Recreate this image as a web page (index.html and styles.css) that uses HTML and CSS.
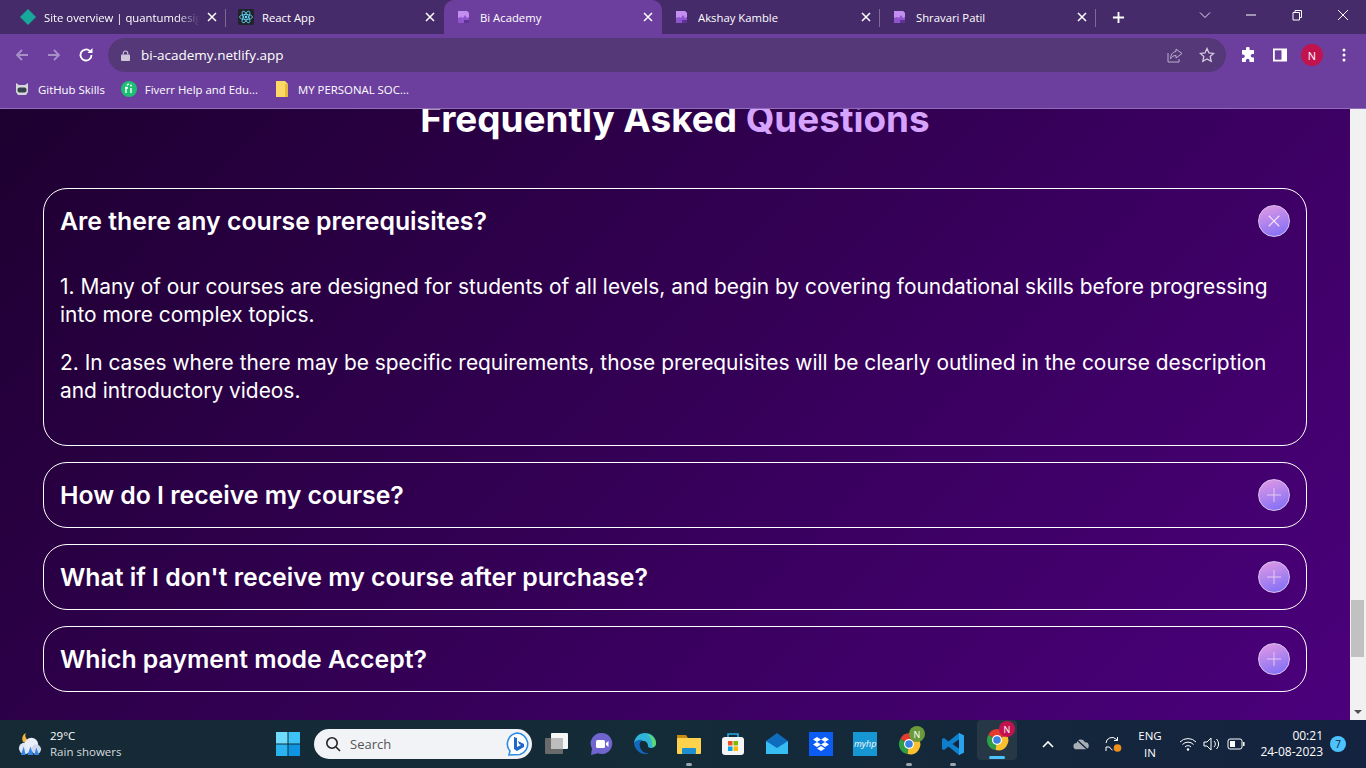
FILE: index.html
```html
<!DOCTYPE html>
<html lang="en">
<head>
    <meta charset="UTF-8">
    <meta name="viewport" content="width=device-width, initial-scale=1.0">
    <title>Bi Academy</title>
    <link rel="stylesheet" href="styles.css">
</head>
<body>
<svg class="defs" width="0" height="0">
    <symbol id="biLogo" viewBox="0 0 16 16">
        <path d="M2 2h9l2 2v10H2z" fill="#8e55cc"/>
        <path d="M2 2h9l2 2v4l-2 1-2-3-2 3-2-1-3 1z" fill="#c48df2"/>
        <path d="M8 11h5v3H8z" fill="#5f3396"/>
    </symbol>
    <symbol id="closeX" viewBox="0 0 12 12">
        <path d="M2 2l8 8M10 2l-8 8" stroke="#fff" stroke-width="1.500" fill="none"/>
    </symbol>
    <symbol id="chromeLogo" viewBox="0 0 24 24">
        <path d="M12 12L3.300 7A10 10 0 0 1 21.700 7z" fill="#e33b2e"/>
        <path d="M12 12l-8.700-5A10 10 0 0 0 10.500 22z" fill="#2f9e44"/>
        <path d="M12 12l9.700-5A10 10 0 0 1 10.500 22z" fill="#fbc02d"/>
        <circle cx="12" cy="12" r="5" fill="#fff"/>
        <circle cx="12" cy="12" r="3.800" fill="#3b82e0"/>
    </symbol>
</svg>

<!-- Tab strip -->
<div class="tabstrip">
    <div class="tab sep">
        <svg class="tab-icon" viewBox="0 0 16 16"><path d="M8 0l8 8-8 8-8-8z" fill="#16a89a"/></svg>
        <span class="tab-title fade">Site overview | quantumdesign</span>
        <svg class="tab-close"><use href="#closeX"/></svg>
    </div>
    <div class="tab">
        <svg class="tab-icon" viewBox="0 0 16 16">
            <rect width="16" height="16" rx="2" fill="#20232a"/>
            <g fill="none" stroke="#61dafb" stroke-width=".8">
                <ellipse cx="8" cy="8" rx="6.500" ry="2.500"/>
                <ellipse cx="8" cy="8" rx="6.500" ry="2.500" transform="rotate(60 8 8)"/>
                <ellipse cx="8" cy="8" rx="6.500" ry="2.500" transform="rotate(120 8 8)"/>
            </g>
            <circle cx="8" cy="8" r="1.300" fill="#61dafb"/>
        </svg>
        <span class="tab-title">React App</span>
        <svg class="tab-close"><use href="#closeX"/></svg>
    </div>
    <div class="tab active">
        <svg class="tab-icon"><use href="#biLogo"/></svg>
        <span class="tab-title">Bi Academy</span>
        <svg class="tab-close"><use href="#closeX"/></svg>
    </div>
    <div class="tab sep">
        <svg class="tab-icon"><use href="#biLogo"/></svg>
        <span class="tab-title">Akshay Kamble</span>
        <svg class="tab-close"><use href="#closeX"/></svg>
    </div>
    <div class="tab sep short">
        <svg class="tab-icon"><use href="#biLogo"/></svg>
        <span class="tab-title">Shravari Patil</span>
        <svg class="tab-close"><use href="#closeX"/></svg>
    </div>
    <svg class="new-tab" viewBox="0 0 14 14"><path d="M7 1v12M1 7h12" stroke="#fff" stroke-width="2"/></svg>
    <div class="window-controls">
        <svg viewBox="0 0 12 12"><path d="M1 3.500l5 5 5-5" stroke="#e8e0f0" fill="none"/></svg>
        <svg viewBox="0 0 12 12"><path d="M1 6h10" stroke="#fff"/></svg>
        <svg viewBox="0 0 12 12"><path d="M2 3.500h6.500V11H2zM4 3.500V1.500h6.500V8.500H8.500" stroke="#fff" fill="none"/></svg>
        <svg viewBox="0 0 12 12"><path d="M1 1l10 10M11 1L1 11" stroke="#fff"/></svg>
    </div>
</div>

<!-- Address bar -->
<div class="toolbar">
    <svg class="nav dim" viewBox="0 0 16 16"><path d="M14 8H3M8 3L3 8l5 5" stroke="#a88fc6" stroke-width="1.800" fill="none"/></svg>
    <svg class="nav dim" viewBox="0 0 16 16"><path d="M2 8h11M8 3l5 5-5 5" stroke="#a88fc6" stroke-width="1.800" fill="none"/></svg>
    <svg class="nav" viewBox="0 0 16 16"><path d="M13.500 8A5.500 5.500 0 1 1 11.800 4" stroke="#fff" stroke-width="1.800" fill="none"/><path d="M9.500 6h5V1z" fill="#fff"/></svg>
    <div class="omnibox">
        <svg class="lock" viewBox="0 0 10 12"><path d="M2.500 5V3.500a2.500 2.500 0 0 1 5 0V5" stroke="#cfc6da" stroke-width="1.200" fill="none"/><rect y="5" width="10" height="7" rx="1" fill="#cfc6da"/></svg>
        <span class="url">bi-academy.netlify.app</span>
        <svg class="omni-icon" viewBox="0 0 16 16"><path d="M9 2l6 4.500L9 11V8.500C6 8.500 4.500 10 3.500 12 3.500 8 5.500 5 9 4.500zM1 6v9h11v-3" stroke="#bdb0cd" fill="none"/></svg>
        <svg class="omni-icon" viewBox="0 0 16 16"><path d="M8 1.500l2 4.400 4.700.5-3.500 3.200 1 4.700L8 11.900l-4.200 2.400 1-4.700L1.300 6.400 6 5.900z" stroke="#d5cce0" stroke-width="1.300" fill="none"/></svg>
    </div>
    <div class="tools">
        <svg viewBox="0 0 16 16"><path d="M6 1.500a1.800 1.800 0 0 1 3.600 0V3H14v4h-1.500a1.800 1.800 0 0 0 0 3.600H14V15H9.500v-1.500a1.800 1.800 0 0 0-3.600 0V15H2v-4h1a1.800 1.800 0 0 0 0-3.600H2V3h4z" fill="#fff"/></svg>
        <svg viewBox="0 0 16 16"><rect x="1" y="1.500" width="14" height="13" fill="#fff"/><rect x="2.800" y="3.300" width="6.700" height="9.400" fill="#6c3f9e"/></svg>
        <span class="avatar">N</span>
        <svg viewBox="0 0 16 16"><circle cx="8" cy="3" r="1.500" fill="#fff"/><circle cx="8" cy="8" r="1.500" fill="#fff"/><circle cx="8" cy="13" r="1.500" fill="#fff"/></svg>
    </div>
</div>

<!-- Bookmarks -->
<div class="bookmarks">
    <div class="bookmark">
        <svg viewBox="0 0 16 16"><path d="M2 2l3 2h6l3-2v9l-2 3H4l-2-3z" fill="#d5d8da"/><rect x="3.500" y="6.500" width="9" height="5" rx="2" fill="#39424e"/></svg>
        <span>GitHub Skills</span>
    </div>
    <div class="bookmark">
        <svg viewBox="0 0 16 16"><circle cx="8" cy="8" r="8" fill="#1dbf73"/><path d="M5 12V6.500h1.500M4 7h3M6.500 4.500C6 3.500 7.500 3 8 3.500M10 7v5" stroke="#fff" stroke-width="1.400" fill="none"/><circle cx="10" cy="4.500" r="1" fill="#fff"/></svg>
        <span>Fiverr Help and Edu...</span>
    </div>
    <div class="bookmark">
        <svg viewBox="0 0 12 16"><path d="M0 0h9l3 3v13H0z" fill="#fcd866"/><path d="M9 0v3h3v13H9z" fill="#e8b93c"/></svg>
        <span>MY PERSONAL SOC...</span>
    </div>
</div>

<!-- Page viewport with its scrollbar -->
<div class="viewport">
    <main class="page">
        <h1 class="faq-title">Frequently Asked <span class="accent">Questions</span></h1>
        <div class="faq-list">
            <section class="faq-item">
                <div class="faq-head">
                    <h3>Are there any course prerequisites?</h3>
                    <button class="toggle" type="button"><svg viewBox="0 0 12 12"><path d="M1.500 1.500l9 9M10.500 1.500l-9 9" stroke="#f0e6fa" stroke-width="1"/></svg></button>
                </div>
                <div class="faq-body">
                    <p>1. Many of our courses are designed for students of all levels, and begin by covering foundational skills before progressing into more complex topics.</p>
                    <p>2. In cases where there may be specific requirements, those prerequisites will be clearly outlined in the course description and introductory videos.</p>
                </div>
            </section>
            <section class="faq-item">
                <div class="faq-head">
                    <h3>How do I receive my course?</h3>
                    <button class="toggle" type="button"><svg viewBox="0 0 14 14"><path d="M7 0v14M0 7h14" stroke="#e2c9f2" stroke-width="1"/></svg></button>
                </div>
            </section>
            <section class="faq-item">
                <div class="faq-head">
                    <h3>What if I don't receive my course after purchase?</h3>
                    <button class="toggle" type="button"><svg viewBox="0 0 14 14"><path d="M7 0v14M0 7h14" stroke="#e2c9f2" stroke-width="1"/></svg></button>
                </div>
            </section>
            <section class="faq-item">
                <div class="faq-head">
                    <h3>Which payment mode Accept?</h3>
                    <button class="toggle" type="button"><svg viewBox="0 0 14 14"><path d="M7 0v14M0 7h14" stroke="#e2c9f2" stroke-width="1"/></svg></button>
                </div>
            </section>
        </div>
    </main>
    <div class="scrollbar">
        <div class="arrow-up"></div>
        <div class="track"><div class="thumb"></div></div>
        <div class="arrow-down"></div>
    </div>
</div>

<!-- Windows taskbar -->
<footer class="taskbar">
    <div class="weather">
        <svg viewBox="0 0 26 26">
            <path d="M9 1a7 7 0 0 0 5 9 7 7 0 0 1-8 0 7 7 0 0 1 3-9z" fill="#f5b53f"/>
            <circle cx="8" cy="17" r="6" fill="#dfe7f5"/>
            <circle cx="15" cy="13" r="7" fill="#e9eef8"/>
            <circle cx="20" cy="18" r="5" fill="#cfd9ee"/>
            <path d="M7 15l-3 9h5zM14 15l-3 9h6zM20 16l-2 8h5z" fill="#3a86e8"/>
        </svg>
        <div class="weather-text">
            <span>29°C</span>
            <span class="muted">Rain showers</span>
        </div>
    </div>
    <div class="start">
        <svg viewBox="0 0 24 24">
            <rect width="11.500" height="11.500" fill="#6fdcfb"/>
            <rect x="12.500" width="11.500" height="11.500" fill="#3dc3f5"/>
            <rect y="12.500" width="11.500" height="11.500" fill="#2bb2f0"/>
            <rect x="12.500" y="12.500" width="11.500" height="11.500" fill="#0f93e3"/>
        </svg>
    </div>
    <div class="search">
        <svg class="search-icon" viewBox="0 0 16 16"><circle cx="7" cy="7" r="5.200" stroke="#222" stroke-width="1.600" fill="none"/><path d="M11 11l4 4" stroke="#222" stroke-width="1.600"/></svg>
        <span>Search</span>
        <svg class="bing" viewBox="0 0 24 24"><path d="M12 1a11 11 0 0 1 3 21.500L4 23l1-4A11 11 0 0 1 12 1z" fill="#fff" stroke="#2b8ae6" stroke-width="1.600"/><path d="M9 5l3 1v9l4-2-2-1-1-3 6 3v3l-7 4-3-2z" fill="#2166c9"/></svg>
    </div>
    <div class="apps">
        <div class="app">
            <svg viewBox="0 0 24 24"><rect x="6" y="1" width="17" height="16" rx="1" fill="#f6f6f6"/><rect y="6" width="18" height="16" rx="1" fill="#6a6a6a"/><rect x="6" y="6" width="12" height="11" fill="#bdbdbd"/></svg>
        </div>
        <div class="app">
            <svg viewBox="0 0 24 24"><path d="M13 1a10.500 10.500 0 1 1-4 20.300L2 23l1-6.500A10.500 10.500 0 0 1 13 1z" fill="#7064cf"/><rect x="7" y="8" width="9" height="8" rx="1.500" fill="#fff"/><path d="M17 11l2.500-2v6L17 13z" fill="#fff"/></svg>
        </div>
        <div class="app">
            <svg viewBox="0 0 24 24"><path d="M1 11C2 5 6 1 12 1c6 0 11 4 11 10 0 4-3 5-5 5s-3-1-3-2c0-3-2-5-5-5-4 0-8 1-9 2z" fill="#2fb4d8"/><path d="M14 2c5 1 9 5 9 9 0 3-2 4-4 4 1-5-1-10-5-13z" fill="#5ed86f"/><path d="M1 11c1-2 5-4 9-3-3 1-4 4-3 7 1 4 5 7 10 6a11.500 11.500 0 0 1-16-10z" fill="#1367bd"/></svg>
        </div>
        <div class="app dot">
            <svg viewBox="0 0 24 24"><path d="M0 3h9l2 3h13v5H0z" fill="#c88a12"/><rect y="6" width="24" height="16" rx="1" fill="#ffd24d"/><rect x="5" y="16" width="14" height="6" rx="1" fill="#1d8fd0"/></svg>
        </div>
        <div class="app">
            <svg viewBox="0 0 24 24"><path d="M7 6V2h10v4" stroke="#27a8e0" stroke-width="1.600" fill="none"/><rect x="1" y="5" width="22" height="18" rx="3" fill="#f5f5f5"/><rect x="7" y="9" width="4.500" height="4.500" fill="#f25022"/><rect x="12.500" y="9" width="4.500" height="4.500" fill="#7fba00"/><rect x="7" y="14.500" width="4.500" height="4.500" fill="#00a4ef"/><rect x="12.500" y="14.500" width="4.500" height="4.500" fill="#ffb900"/></svg>
        </div>
        <div class="app">
            <svg viewBox="0 0 24 24"><path d="M12 1l11 8v13H1V9z" fill="#0f6cbd"/><path d="M1 9l11 7 11-7v13H1z" fill="#36bdf2"/></svg>
        </div>
        <div class="app">
            <svg viewBox="0 0 24 24"><rect width="24" height="24" fill="#0a5cf5"/><path d="M8 5l4 2.500L8 10 4 7.500zM16 5l4 2.500-4 2.500-4-2.500zM8 10l4 2.500L8 15l-4-2.500zM16 10l4 2.500-4 2.500-4-2.500zM12 14l4 2.500-4 2.500-4-2.500z" fill="#fff"/></svg>
        </div>
        <div class="app">
            <svg viewBox="0 0 24 24"><rect width="24" height="24" fill="#1696d2"/></svg>
            <span class="hp-label">myhp</span>
        </div>
        <div class="app dot">
            <svg viewBox="0 0 24 24"><use href="#chromeLogo"/></svg>
            <span class="app-badge green">N</span>
        </div>
        <div class="app dot">
            <svg viewBox="0 0 24 24"><path d="M18 1l5 2.500v17L18 23 7.500 14.500 3 18l-2-1V7l2-1 4.500 3.500z" fill="#0e7fcc"/><path d="M18 7.500L11.500 12l6.500 4.500z" fill="#14233f"/><path d="M18 1l5 2.500v17L18 23z" fill="#2ba3ea"/></svg>
        </div>
        <div class="app current">
            <svg viewBox="0 0 24 24"><use href="#chromeLogo"/></svg>
            <span class="app-badge red">N</span>
        </div>
    </div>
    <div class="tray">
        <svg class="tray-chevron" viewBox="0 0 12 8"><path d="M1 7l5-5 5 5" stroke="#fff" stroke-width="1.600" fill="none"/></svg>
        <svg class="tray-cloud" viewBox="0 0 18 14"><path d="M4 13a3.500 3.500 0 0 1 0-7 5 5 0 0 1 9.500-1A4 4 0 0 1 14 13z" fill="#a9b0b5"/><path d="M3 1l13 12" stroke="#14233f" stroke-width="1.500"/></svg>
        <svg class="tray-sync" viewBox="0 0 18 18"><path d="M2 8a6 6 0 0 1 10-4l1.500 1.500M13.500 2v3.500H10M2 12v4M2 12h3.500a6 6 0 0 0 3 3" stroke="#fff" fill="none"/><circle cx="13.500" cy="13" r="3.800" fill="#f18f1d"/></svg>
        <div class="lang"><span>ENG</span><span>IN</span></div>
        <svg class="tray-icon" viewBox="0 0 18 14"><path d="M1 5a11 11 0 0 1 16 0M3.500 7.500a7.500 7.500 0 0 1 11 0M6 10a4 4 0 0 1 6 0" stroke="#fff" fill="none"/><circle cx="9" cy="12.500" r="1.200" fill="#fff"/></svg>
        <svg class="tray-icon" viewBox="0 0 18 14"><path d="M1 5h3l4-4v12l-4-4H1z" stroke="#fff" fill="none"/><path d="M11 4a4 4 0 0 1 0 6M13.500 2a7 7 0 0 1 0 10" stroke="#fff" fill="none"/></svg>
        <svg class="tray-icon" viewBox="0 0 18 14"><rect x="1" y="2" width="14" height="10" rx="2" stroke="#fff" fill="none"/><rect x="3" y="4" width="5" height="6" fill="#fff"/><rect x="16" y="5" width="1.500" height="4" fill="#fff"/></svg>
        <div class="clock"><span>00:21</span><span>24-08-2023</span></div>
        <span class="notif">7</span>
    </div>
</footer>
</body>
</html>
```

FILE: styles.css
```css
* {
    box-sizing: border-box;
}

html, body {
    height: 100%;
}

body {
    margin: 0;
    height: 768px;
    overflow: hidden;
    display: flex;
    flex-direction: column;
    font-family: "Open Sans", "Liberation Sans", sans-serif;
    background-color: #000;
}

.defs {
    position: absolute;
}

/* Tab strip */
.tabstrip {
    height: 34px;
    flex: none;
    display: flex;
    align-items: stretch;
    padding-left: 8px;
    background-color: #452b69;
}

.tab {
    width: 218px;
    flex: none;
    display: flex;
    align-items: center;
    padding: 0 8px 0 12px;
    color: #fff;
    font-size: 11.300px;
    position: relative;
}

.tab.short {
    width: 216px;
}

.tab.sep::after {
    content: "";
    position: absolute;
    right: 0;
    top: 9px;
    height: 18px;
    width: 1px;
    background-color: #7d6a98;
}

.tab.active {
    background-color: #6c3f9e;
    border-radius: 10px 10px 0 0;
}

.tab-icon {
    width: 16px;
    height: 16px;
    flex: none;
}

.tab-title {
    flex: 1;
    margin-left: 8px;
    white-space: nowrap;
    overflow: hidden;
}

.tab-title.fade {
    -webkit-mask-image: linear-gradient(90deg, #000 85%, transparent);
    mask-image: linear-gradient(90deg, #000 85%, transparent);
}

.tab-close {
    width: 12px;
    height: 12px;
    flex: none;
    margin-left: 6px;
}

.new-tab {
    width: 13px;
    height: 13px;
    flex: none;
    align-self: center;
    margin-left: 16px;
}

.window-controls {
    display: flex;
    margin-left: auto;
    padding: 9px 17px 0 0;
    gap: 34px;
}

.window-controls svg {
    width: 12px;
    height: 12px;
}

/* Address bar */
.toolbar {
    height: 42px;
    flex: none;
    display: flex;
    align-items: center;
    padding-left: 14px;
    background-color: #6c3f9e;
}

.nav {
    width: 16px;
    height: 16px;
    margin-right: 16px;
    flex: none;
}

.omnibox {
    width: 1118px;
    height: 34px;
    margin-left: -2px;
    flex: none;
    display: flex;
    align-items: center;
    padding: 0 11px 0 13px;
    border-radius: 17px;
    background-color: #553878;
    color: #fff;
    font-size: 13.500px;
}

.lock {
    width: 9px;
    height: 11px;
    flex: none;
}

.url {
    flex: 1;
    margin-left: 11px;
}

.omni-icon {
    width: 16px;
    height: 16px;
    margin-left: 16px;
    flex: none;
}

.tools {
    display: flex;
    align-items: center;
    gap: 16px;
    margin-left: 14px;
}

.tools svg {
    width: 16px;
    height: 16px;
}

.avatar {
    width: 22px;
    height: 22px;
    margin: 0 -3px;
    border-radius: 50%;
    display: flex;
    align-items: center;
    justify-content: center;
    background-color: #c2134f;
    color: #fff;
    font-size: 11px;
}

/* Bookmarks */
.bookmarks {
    height: 33px;
    flex: none;
    display: flex;
    align-items: center;
    padding: 0 0 6px 14px;
    gap: 16px;
    background-color: #6c3f9e;
    border-bottom: 1px solid #8e6cb8;
    color: #fff;
    font-size: 11.400px;
}

.bookmark {
    display: flex;
    align-items: center;
    gap: 8px;
}

.bookmark svg {
    width: 16px;
    height: 16px;
}

/* Page */
.viewport {
    flex: 1;
    min-height: 0;
    display: flex;
}

.page {
    flex: 1;
    min-width: 0;
    overflow: hidden;
    padding: 0 43px;
    color: #fff;
    font-family: Inter, "Open Sans", sans-serif;
    background: linear-gradient(135deg, #1e0030 0%, #4b007c 100%);
}

.faq-title {
    margin: -8px 0 0;
    height: 87px;
    text-align: center;
    font-size: 36.900px;
    line-height: 36px;
    font-weight: 700;
}

.accent {
    color: #d6a3ff;
}

.faq-list {
    display: flex;
    flex-direction: column;
    gap: 16px;
}

.faq-item {
    border: 1px solid #fff;
    border-radius: 24px;
    padding: 0 16px;
}

.faq-head {
    height: 64px;
    display: flex;
    align-items: center;
    justify-content: space-between;
}

.faq-head h3 {
    margin: 0;
    font-size: 24.800px;
    font-weight: 600;
}

.toggle {
    width: 32px;
    height: 32px;
    padding: 0;
    display: flex;
    align-items: center;
    justify-content: center;
    border: 1px solid #d8c4ee;
    border-radius: 50%;
    background: linear-gradient(160deg, #e49ae4, #7a6cf8);
}

.toggle svg {
    width: 14px;
    height: 14px;
}

.faq-body {
    padding: 20px 0 40px;
    font-size: 20.900px;
    line-height: 28px;
}

.faq-body p {
    margin: 0 0 20px;
}

.faq-body p:last-child {
    margin-bottom: 0;
}

/* Scrollbar */
.scrollbar {
    width: 16px;
    flex: none;
    display: flex;
    flex-direction: column;
    background-color: #f1f1f1;
}

.track {
    flex: 1;
    padding: 475px 2px 0 1px;
}

.thumb {
    height: 57px;
    background-color: #c1c1c1;
}

.arrow-up,
.arrow-down {
    height: 16px;
    flex: none;
}

.arrow-down {
    margin-top: auto;
    position: relative;
}

.arrow-down::after {
    content: "";
    position: absolute;
    left: 4px;
    top: 6px;
    border-left: 4px solid transparent;
    border-right: 4px solid transparent;
    border-top: 4px solid #505050;
}

/* Taskbar */
.taskbar {
    height: 48px;
    flex: none;
    display: flex;
    align-items: center;
    color: #fff;
    font-size: 12px;
    background: linear-gradient(90deg, #152a35 0%, #142b38 50%, #14233f 100%);
}

.weather {
    width: 266px;
    flex: none;
    display: flex;
    align-items: center;
    padding-left: 17px;
    gap: 8px;
}

.weather svg {
    width: 25px;
    height: 25px;
}

.weather-text {
    display: flex;
    flex-direction: column;
    font-size: 11.500px;
    line-height: 16px;
}

.muted {
    color: #d5dbdf;
}

.start {
    width: 48px;
    flex: none;
    padding-left: 10px;
    display: flex;
    align-items: center;
}

.start svg {
    width: 24px;
    height: 24px;
}

.search {
    width: 218px;
    height: 30px;
    flex: none;
    display: flex;
    align-items: center;
    padding: 0 9px 0 11px;
    border-radius: 15px;
    background-color: #f1f3f6;
    color: #555;
    font-size: 13px;
}

.search-icon {
    width: 16px;
    height: 16px;
    margin-right: 9px;
}

.bing {
    width: 24px;
    height: 24px;
    margin: 0 -6px 0 auto;
}

.apps {
    display: flex;
    margin-left: 3px;
    flex: none;
}

.app {
    width: 44px;
    height: 48px;
    position: relative;
    display: flex;
    align-items: center;
    justify-content: center;
}

.app svg {
    width: 24px;
    height: 24px;
}

.app.dot::after {
    content: "";
    position: absolute;
    bottom: 2px;
    left: 19px;
    width: 6px;
    height: 3px;
    border-radius: 2px;
    background-color: #9aa5ad;
}

.app.current {
    background-color: #263746;
    border-radius: 4px;
    height: 40px;
    width: 40px;
    margin: 0 2px;
}

.app.current::after {
    content: "";
    position: absolute;
    bottom: 1px;
    left: 12px;
    width: 16px;
    height: 3px;
    border-radius: 2px;
    background-color: #4cc2ff;
}

.hp-label {
    position: absolute;
    left: 11px;
    top: 17px;
    font-size: 9px;
    font-style: italic;
    color: #fff;
}

.app-badge {
    position: absolute;
    top: 3px;
    right: 3px;
    width: 16px;
    height: 16px;
    border-radius: 50%;
    display: flex;
    align-items: center;
    justify-content: center;
    font-size: 9px;
    color: #fff;
}

.app-badge.green {
    background-color: #6b9a3a;
    top: 6px;
    right: 6px;
}

.app-badge.red {
    background-color: #c2134f;
    top: 1px;
    right: 2px;
}

.tray {
    flex: 1;
    display: flex;
    align-items: center;
    padding-left: 23px;
}

.tray-chevron {
    width: 12px;
    height: 8px;
    margin-right: 19px;
}

.tray-cloud {
    width: 16px;
    height: 14px;
    margin-right: 15px;
}

.tray-sync {
    width: 18px;
    height: 18px;
    margin-right: 15px;
}

.lang {
    display: flex;
    flex-direction: column;
    align-items: center;
    width: 26px;
    margin-right: 16px;
    font-size: 11.500px;
    line-height: 17px;
}

.tray-icon {
    width: 18px;
    height: 14px;
    margin-right: 6px;
}

.clock {
    display: flex;
    flex-direction: column;
    align-items: flex-end;
    width: 70px;
    margin-left: 2px;
    font-size: 12px;
    line-height: 16px;
}

.notif {
    width: 16px;
    height: 16px;
    margin-left: 7px;
    border-radius: 50%;
    display: flex;
    align-items: center;
    justify-content: center;
    background-color: #4cc2ff;
    color: #10202c;
    font-size: 10px;
}
```
